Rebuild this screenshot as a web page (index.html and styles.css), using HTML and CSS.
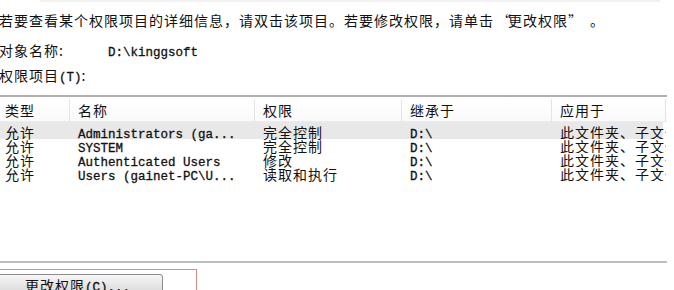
FILE: index.html
```html
<!DOCTYPE html>
<html lang="zh-CN">
<head>
<meta charset="utf-8">
<title>权限</title>
<link rel="stylesheet" href="styles.css">
</head>
<body>
<div class="page">
  <div class="topline"></div>
  <div class="intro">若要查看某个权限项目的详细信息，请双击该项目。若要修改权限，请单击<span class="q-open">“</span>更改权限<span class="q-close">”</span>。</div>
  <div class="field"><span class="field-label">对象名称:</span><span class="mono">D:\kinggsoft</span></div>
  <div class="caption">权限项目<span class="mono">(T)</span>:</div>
  <div class="list">
    <div class="row head">
      <div class="cell first">类型</div>
      <div class="cell">名称</div>
      <div class="cell">权限</div>
      <div class="cell">继承于</div>
      <div class="cell">应用于</div>
    </div>
    <div class="row item sel">
      <div class="cell first">允许</div>
      <div class="cell mono">Administrators (ga...</div>
      <div class="cell">完全控制</div>
      <div class="cell mono">D:\</div>
      <div class="cell">此文件夹、子文件夹和文件</div>
    </div>
    <div class="row item">
      <div class="cell first">允许</div>
      <div class="cell mono">SYSTEM</div>
      <div class="cell">完全控制</div>
      <div class="cell mono">D:\</div>
      <div class="cell">此文件夹、子文件夹和文件</div>
    </div>
    <div class="row item">
      <div class="cell first">允许</div>
      <div class="cell mono">Authenticated Users</div>
      <div class="cell">修改</div>
      <div class="cell mono">D:\</div>
      <div class="cell">此文件夹、子文件夹和文件</div>
    </div>
    <div class="row item">
      <div class="cell first">允许</div>
      <div class="cell mono">Users (gainet-PC\U...</div>
      <div class="cell">读取和执行</div>
      <div class="cell mono">D:\</div>
      <div class="cell">此文件夹、子文件夹和文件</div>
    </div>
  </div>
  <div class="highlight">
    <button class="btn">更改权限<span class="mono">(C)...</span></button>
  </div>
</div>
</body>
</html>
```
FILE: styles.css
```css
html, body {
  margin: 0;
  padding: 0;
  background: #ffffff;
}
body {
  font-family: "Noto Sans CJK SC", "Liberation Sans", sans-serif;
  font-size: 14px;
  letter-spacing: 1px;
  text-spacing-trim: space-all;
  color: #111;
  overflow: hidden;
}
.page {
  width: 674px;
  height: 290px;
  overflow: hidden;
}
.mono {
  font-family: "Liberation Mono", "DejaVu Sans Mono", monospace;
  font-size: 12.5px;
  letter-spacing: 0;
  -webkit-text-stroke: 0.3px #111;
}
.topline {
  height: 2px;
  background: #f2f2f2;
  margin: 0 14px 0 40px;
}
.intro {
  margin-top: 10px;
  margin-left: -1px;
  height: 16px;
  line-height: 16px;
  white-space: nowrap;
}
.q-open,
.q-close {
  display: inline-block;
  width: 11px;
}
.q-open {
  text-align: right;
  padding-left: 3px;
}
.q-close {
  text-align: left;
  padding-right: 11px;
}
.field {
  margin-top: 14px;
  height: 16px;
  line-height: 16px;
  display: flex;
  align-items: baseline;
  margin-left: -1px;
}
.field-label {
  width: 109px;
}
.caption {
  margin-top: 9px;
  margin-left: -1px;
  height: 16px;
  line-height: 16px;
}
.list {
  margin-top: 12px;
  width: 667px;
  height: 164px;
  border-top: 2px solid #b0b0b0;
  border-bottom: 2px solid #bdbdbd;
  overflow: hidden;
}
.row {
  display: grid;
  grid-template-columns: 70px 185px 147px 150px 114px;
  white-space: nowrap;
}
.row.head {
  height: 25px;
  line-height: 23px;
  padding-top: 2px;
  box-sizing: border-box;
  border-bottom: 1px solid #ececec;
  background: linear-gradient(#ffffff, #fafafa);
}
.row.head .cell {
  border-right: 1px solid #e4e4e4;
}
.row.item {
  height: 14px;
  line-height: 14px;
  align-items: baseline;
}
.row.sel {
  height: 17px;
  padding-top: 3px;
  box-sizing: border-box;
  background: #e8e8e8;
  width: 663px;
}
.cell {
  padding-left: 8px;
  white-space: nowrap;
}
.cell:last-child {
  overflow: hidden;
}
.cell.first {
  padding-left: 5px;
}
.highlight {
  margin-top: 6px;
  margin-left: -10px;
  width: 207px;
  height: 40px;
  border: 1px solid #e08a8a;
  padding-top: 4px;
  box-sizing: border-box;
}
.btn {
  display: block;
  margin-left: 1px;
  width: 171px;
  height: 22px;
  border: 1px solid #8c8c8c;
  border-radius: 3px;
  background: linear-gradient(#f7f7f7, #e6e6e6 50%, #d9d9d9);
  font-family: "Noto Sans CJK SC", "Liberation Sans", sans-serif;
  font-size: 14px;
  letter-spacing: 1px;
  line-height: 20px;
  color: #111;
  padding: 0;
  text-align: center;
}
```
